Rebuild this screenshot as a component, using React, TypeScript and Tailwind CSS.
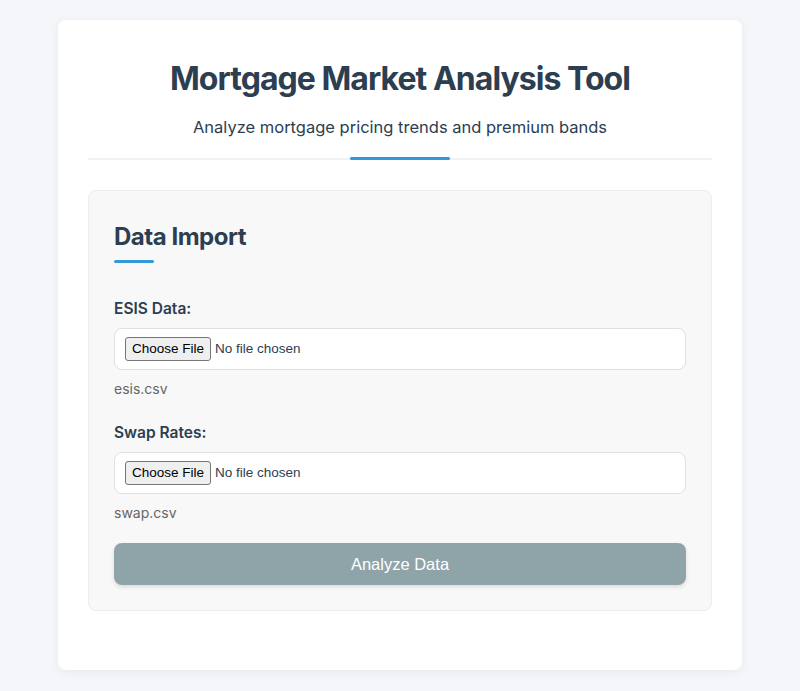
import React from 'react'

function FileField({ label, hint }: { label: string; hint: string }) {
    return (
        <div>
            <label className="block text-[15.5px] leading-[20px] font-semibold text-[#2c3e50] mb-[9px]">{label}</label>
            <div className="h-[42px] bg-white border border-[#dcdfe3] rounded-lg flex items-center px-[10px]">
                <input
                    type="file"
                    className="text-[13.5px] text-[#2c3e50] [font-family:'Liberation_Sans',Arial,sans-serif] file:mr-1 file:px-[6px] file:py-[1px] file:border file:border-[#767676] file:rounded-[3px] file:bg-[#efefef] file:text-black file:text-[13.5px]"
                />
            </div>
            <div className="mt-[9px] text-[14px] leading-[20px] text-[#666]">{hint}</div>
        </div>
    )
}

export default function App() {
    return (
        <div className="min-h-screen bg-[#f5f6fa] pt-5 pb-5 [font-family:Inter,'Noto_Sans',sans-serif]">
            <div className="w-[684px] mx-auto bg-white rounded-lg shadow-[0_2px_10px_rgba(0,0,0,0.06)] px-[30px] pt-[39px] pb-[59px]">
                {/* Header */}
                <header className="text-center">
                    <h1 className="text-[32px] leading-[40px] font-bold tracking-[-0.03em] text-[#2c3e50]">Mortgage Market Analysis Tool</h1>
                    <p className="mt-4 text-[16.5px] leading-[24px] text-[#2c3e50]">Analyze mortgage pricing trends and premium bands</p>
                    <div className="relative mt-[18px] h-[3px]">
                        <div className="absolute left-0 right-0 top-[1px] h-[2px] bg-[#f0f1f3]" />
                        <div className="absolute left-1/2 -translate-x-1/2 top-0 w-[100px] h-[3px] rounded-full bg-[#3498db]" />
                    </div>
                </header>

                {/* Data import */}
                <section className="mt-[30px] bg-[#f8f8f8] border border-[#ebedf0] rounded-lg pt-[31px] px-[25px] pb-[25px]">
                    <h2 className="text-[24px] leading-[30px] font-bold tracking-[-0.02em] text-[#2c3e50]">Data Import</h2>
                    <div className="mt-2 w-10 h-[3px] rounded-full bg-[#3498db]" />

                    <div className="mt-9">
                        <FileField label="ESIS Data:" hint="esis.csv" />
                    </div>
                    <div className="mt-6">
                        <FileField label="Swap Rates:" hint="swap.csv" />
                    </div>

                    <button
                        disabled
                        className="mt-[20px] w-full h-[42px] rounded-lg bg-[#8fa4a9] text-white text-[16.5px] shadow-[0_2px_4px_rgba(0,0,0,0.12)] [font-family:'Liberation_Sans',Arial,sans-serif]"
                    >
                        Analyze Data
                    </button>
                </section>
            </div>
        </div>
    )
}
